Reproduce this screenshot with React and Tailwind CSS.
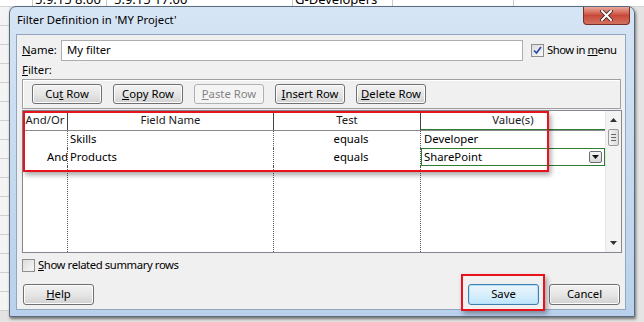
import React from "react";

const btnBase =
  "flex h-[21px] w-[71px] items-center justify-center rounded-[3px] border border-[#707070] bg-gradient-to-b from-[#f2f2f2] via-[#e6e6e6] to-[#d2d2d2] text-black shadow-[inset_0_0_0_1px_#fcfcfc]";

function Btn({ children }) {
  return (
    <div className={btnBase}>
      <span>{children}</span>
    </div>
  );
}

function ToolBtn({ children, disabled }) {
  if (disabled) {
    return (
      <div className="flex h-[20px] w-[70px] items-center justify-center rounded-[3px] border border-[#adb2b5] bg-[#f4f4f4] text-[#838383]">
        <span>{children}</span>
      </div>
    );
  }
  return (
    <div className="flex h-[20px] w-[70px] items-center justify-center rounded-[3px] border border-[#707070] bg-gradient-to-b from-[#f2f2f2] via-[#e6e6e6] to-[#d2d2d2] text-black shadow-[inset_0_0_0_1px_#fcfcfc]">
      <span>{children}</span>
    </div>
  );
}

function Check({ checked }) {
  return (
    <div className="flex h-[13px] w-[13px] shrink-0 items-center justify-center border border-[#8e8f8f] bg-gradient-to-br from-[#dcdcdc] to-[#f8f8f8]">
      {checked && (
        <svg width="9" height="9" viewBox="0 0 9 9">
          <path d="M1 4.5 L3.5 7 L8 1" fill="none" stroke="#2b4aa8" strokeWidth="1.7" />
        </svg>
      )}
    </div>
  );
}

function BgLines() {
  // the Project view that shows behind the dialog
  const rows = [0, 1, 2, 3, 4, 5, 6, 7, 8, 9, 10, 11, 12, 13, 14, 15];
  return (
    <div className="absolute inset-0">
      <div className="flex h-[7px] overflow-hidden whitespace-nowrap border-b border-[#d4d4d4] bg-white text-[13px] leading-[14px]">
        <div className="h-full w-[33px] shrink-0 border-r border-[#c8c8c8]" />
        <div className="-mt-[8px] h-[15px] w-[74px] shrink-0 overflow-hidden border-r border-[#c8c8c8] pl-[2px]">5.9.15 8.00</div>
        <div className="-mt-[8px] h-[15px] w-[186px] shrink-0 overflow-hidden border-r border-[#c8c8c8] pl-[7px]">5.9.15 17.00</div>
        <div className="-mt-[8px] h-[15px] w-[100px] shrink-0 overflow-hidden border-r border-[#c8c8c8] pl-[2px]">G-Developers</div>
        <div className="h-full w-[121px] shrink-0 border-r border-[#c8c8c8]" />
        <div className="h-full flex-1" />
      </div>
      <div className="flex w-[9px] flex-col bg-[#f4f4f4]">
        {rows.map((r) => (
          <div key={r} className="h-[19px] border-b border-[#d0d0d0]" />
        ))}
      </div>
    </div>
  );
}

export default function App() {
  return (
    <div className="relative h-[322px] w-[644px] overflow-hidden bg-[#e4e4e4] font-['Noto_Sans',sans-serif] text-[11.3px] text-black">
      <BgLines />

      {/* dialog window */}
      <div className="absolute left-[9px] top-[6px] flex h-[311px] w-[626px] flex-col rounded-t-[7px] border border-[#5b6b7e] bg-gradient-to-b from-[#d6e5f5] via-[#c6daef] to-[#b9d1ec] shadow-[1px_2px_3px_rgba(0,0,0,0.5)]">
        <div className="relative flex h-[27px] items-center whitespace-nowrap pl-[7px] text-black">
          <span>Filter Definition in 'MY Project'</span>
          <div className="absolute right-[4px] top-[0px] flex h-[18px] w-[47px] items-center justify-center rounded-b-[4px] border border-t-0 border-[#7a2d24] bg-gradient-to-b from-[#e8a89c] via-[#c8493a] to-[#d2705f]">
            <svg width="13" height="11" viewBox="0 0 13 11">
              <path d="M2 1 L11 10 M11 1 L2 10" stroke="#3a2220" strokeWidth="3.6" strokeLinecap="round" />
              <path d="M2 1 L11 10 M11 1 L2 10" stroke="#ffffff" strokeWidth="2" strokeLinecap="round" />
            </svg>
          </div>
        </div>

        {/* client area */}
        <div className="ml-[6px] flex h-[276px] w-[610px] flex-col whitespace-nowrap border border-[#91a7c0] bg-[#f0f0f0] pl-[5px] pr-[4px]">
          {/* name row */}
          <div className="mt-[5px] flex h-[21px] items-center">
            <div className="w-[39px] shrink-0">
              <span className="underline">N</span>ame:
            </div>
            <div className="flex h-[21px] w-[462px] shrink-0 items-center border border-[#abadb3] bg-white pl-[5px]">
              <span>My filter</span>
            </div>
            <div className="ml-[8px]">
              <Check checked />
            </div>
            <div className="ml-[3px] tracking-[-0.5px]">
              Show in <span className="underline">m</span>enu
            </div>
          </div>

          <div className="mt-[1px] h-[16px] leading-[16px]">
            <span className="underline">F</span>ilter:
          </div>

          {/* toolbar */}
          <div className="mt-[1px] flex h-[30px] items-center gap-[11px] border border-[#a0a0a0] pl-[9px] shadow-[inset_1px_1px_0_#ffffff]">
            <ToolBtn>
              Cu<span className="underline">t</span> Row
            </ToolBtn>
            <ToolBtn>
              <span className="underline">C</span>opy Row
            </ToolBtn>
            <ToolBtn disabled>
              <span className="underline">P</span>aste Row
            </ToolBtn>
            <ToolBtn>
              <span className="underline">I</span>nsert Row
            </ToolBtn>
            <ToolBtn>
              <span className="underline">D</span>elete Row
            </ToolBtn>
          </div>

          {/* grid */}
          <div className="mt-[1px] flex h-[143px] w-[600px] border border-[#828790] bg-white">
            <div className="flex flex-1 flex-col">
              <div className="grid h-[20px] grid-cols-[45px_206px_147px_184px] border-b border-[#8a8a8a] text-[#1a1a1a]">
                <div className="flex items-center justify-center border-r border-[#444]">And/Or</div>
                <div className="flex items-center justify-center border-r border-[#444]">Field Name</div>
                <div className="flex items-center justify-center border-r border-[#444]">Test</div>
                <div className="flex items-center justify-center border-b border-[#2e7d32]">Value(s)</div>
              </div>
              <div className="grid flex-1 grid-cols-[45px_206px_147px_184px] grid-rows-[17px_18px_1fr]">
                <div className="border-r border-dotted border-[#555]" />
                <div className="flex items-center border-r border-dotted border-[#555] pl-[2px]">Skills</div>
                <div className="flex items-center justify-center border-r border-dotted border-[#555] pl-[8px]">equals</div>
                <div className="flex items-center pl-[3px]">Developer</div>

                <div className="flex items-center overflow-hidden border-r border-dotted border-[#555] pl-[24px]">
                  <span>And</span>
                </div>
                <div className="flex items-center border-r border-dotted border-[#555] pl-[2px]">Products</div>
                <div className="flex items-center justify-center border-r border-dotted border-[#555] pl-[8px]">equals</div>
                <div className="flex items-center justify-between border border-[#2e7d32] pl-[2px] pr-[2px]">
                  <span>SharePoint</span>
                  <div className="flex h-[12px] w-[13px] items-center justify-center rounded-[2px] border border-[#6d6d6d] bg-gradient-to-b from-[#f4f4f4] to-[#d8d8d8]">
                    <svg width="7" height="4" viewBox="0 0 7 4">
                      <path d="M0 0 H7 L3.5 4 Z" fill="#111" />
                    </svg>
                  </div>
                </div>

                <div className="border-r border-dotted border-[#555]" />
                <div className="border-r border-dotted border-[#555]" />
                <div className="border-r border-dotted border-[#555]" />
                <div />
              </div>
            </div>
            {/* scrollbar */}
            <div className="flex w-[16px] flex-col items-center border-l border-[#e6e6e6] bg-[#f3f3f3]">
              <div className="flex h-[18px] items-center justify-center">
                <svg width="7" height="4" viewBox="0 0 7 4">
                  <path d="M0 4 H7 L3.5 0 Z" fill="#333" />
                </svg>
              </div>
              <div className="flex h-[17px] w-[11px] flex-col items-center justify-center gap-[2px] rounded-[2px] border border-[#9a9a9a] bg-gradient-to-r from-[#f4f4f4] to-[#dcdcdc]">
                <div className="h-px w-[5px] bg-[#666]" />
                <div className="h-px w-[5px] bg-[#666]" />
                <div className="h-px w-[5px] bg-[#666]" />
              </div>
              <div className="flex-1" />
              <div className="flex h-[18px] items-center justify-center">
                <svg width="7" height="4" viewBox="0 0 7 4">
                  <path d="M0 0 H7 L3.5 4 Z" fill="#333" />
                </svg>
              </div>
            </div>
          </div>

          {/* summary rows checkbox */}
          <div className="mt-[5px] flex h-[14px] items-center">
            <Check />
            <div className="ml-[3px] tracking-[-0.4px]">
              <span className="underline">S</span>how related summary rows
            </div>
          </div>

          {/* bottom buttons */}
          <div className="mt-[12px] flex h-[21px] items-center pl-[1px] pr-[1px]">
            <Btn>
              <span className="underline">H</span>elp
            </Btn>
            <div className="flex-1" />
            <div className="flex h-[21px] w-[71px] items-center justify-center rounded-[3px] border border-[#3c7fb1] bg-gradient-to-b from-[#eaf6fd] via-[#d9eefa] to-[#bee6fd] shadow-[inset_0_0_0_1px_#b6e1f9]">
              <span>Save</span>
            </div>
            <div className="ml-[10px]">
              <Btn>Cancel</Btn>
            </div>
          </div>
        </div>
      </div>

      {/* red highlight boxes */}
      <div className="pointer-events-none absolute left-[23px] top-[111px] h-[61px] w-[526px] border-2 border-[#e8121c] shadow-[2px_3px_5px_rgba(0,0,0,0.35)]" />
      <div className="pointer-events-none absolute left-[461px] top-[274px] h-[37px] w-[84px] border-2 border-[#e8121c] shadow-[2px_3px_5px_rgba(0,0,0,0.35)]" />
    </div>
  );
}
